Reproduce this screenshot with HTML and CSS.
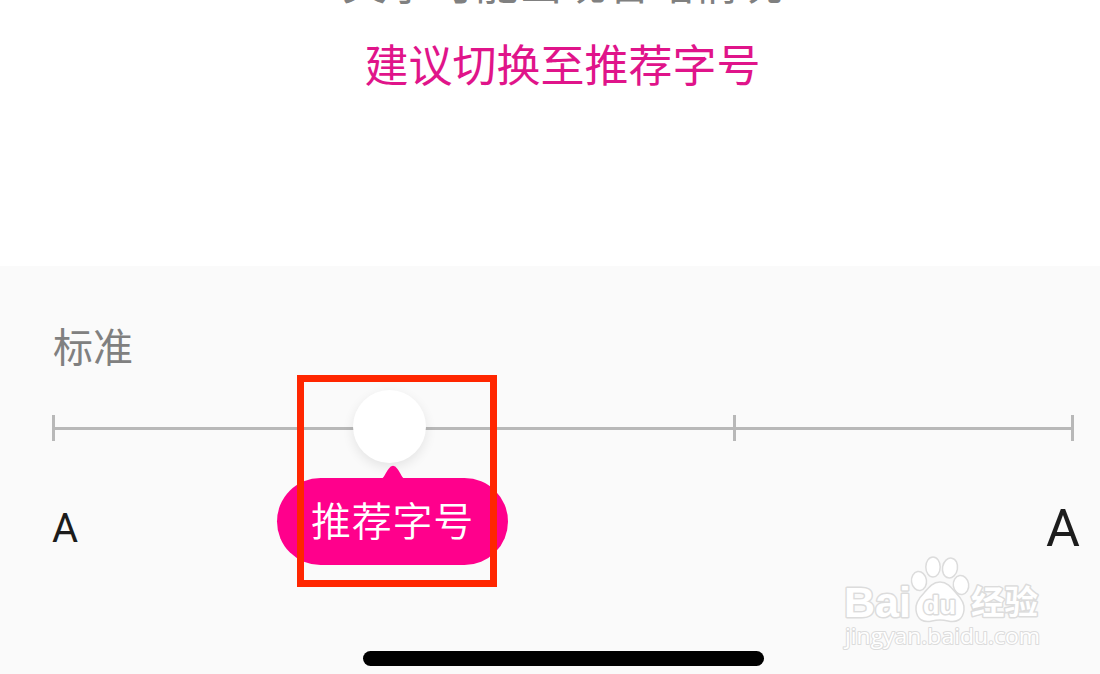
FILE: index.html
```
<!DOCTYPE html>
<html lang="zh-CN">
<head>
    <meta charset="UTF-8">
    <meta name="viewport" content="width=device-width, initial-scale=1.0">
    <title>字号设置</title>
    <link rel="stylesheet" href="styles.css">
</head>
<body>
    <div class="page">
        <div class="preview">
            <p class="notice">文字可能出现省略情况</p>
            <p class="suggest">建议切换至推荐字号</p>
        </div>

        <div class="panel">
            <div class="level">标准</div>

            <div class="slider">
                <span class="tick"></span>
                <span class="line"></span>
                <span class="tick"></span>
                <span class="line"></span>
                <span class="tick"></span>
                <span class="line line-last"></span>
                <span class="tick"></span>
                <div class="thumb"></div>
                <div class="tip">
                    <svg class="tip-arrow" width="26" height="14" viewBox="0 0 26 14">
                        <path d="M1 14 C4 13 5 9 8.5 4 Q13 -2.5 17.5 4 C21 9 22 13 25 14 Z" fill="#ff008c"/>
                    </svg>
                    推荐字号
                </div>
                <div class="highlight"></div>
            </div>

            <div class="sizes">
                <span class="size-small">A</span>
                <span class="size-large">A</span>
            </div>

            <div class="home-bar"></div>
        </div>

        <svg class="watermark" width="210" height="110" viewBox="0 0 210 110">
            <g fill="#fff" stroke="#dcdcdc" stroke-width="1.5">
                <ellipse cx="79" cy="31" rx="7.5" ry="9.5" transform="rotate(-8 79 31)"/>
                <ellipse cx="93" cy="17" rx="7.2" ry="10"/>
                <ellipse cx="110" cy="18" rx="7.5" ry="10" transform="rotate(10 110 18)"/>
                <ellipse cx="121" cy="35" rx="7.7" ry="9.5" transform="rotate(-8 121 35)"/>
                <path d="M100 32 C107 32 111 37 116 43 C121 48 125 53 124 60 C123 70 116 73 108 71 C102 69.5 98 69.5 92 71 C84 73 77 70 76 60 C75 53 79 48 84 43 C89 37 93 32 100 32 Z"/>
            </g>
            <text class="mark-name" x="4" y="67" textLength="67" lengthAdjust="spacingAndGlyphs">Bai</text>
            <text class="mark-du" x="83" y="64" textLength="33" lengthAdjust="spacingAndGlyphs">du</text>
            <text class="mark-cn" x="131" y="64" textLength="67" lengthAdjust="spacingAndGlyphs">经验</text>
            <text class="mark-url" x="5" y="94" textLength="195" lengthAdjust="spacingAndGlyphs">jingyan.baidu.com</text>
        </svg>
    </div>
</body>
</html>
```

FILE: styles.css
```
* {
    margin: 0;
    padding: 0;
    box-sizing: border-box;
}

body {
    font-family: "Noto Sans CJK SC", sans-serif;
    background: #fff;
    overflow: hidden;
}

.page {
    position: relative;
    height: 674px;
    display: flex;
    flex-direction: column;
}

.preview {
    height: 266px;
    padding-left: 25px;
    overflow: hidden;
    text-align: center;
    font-size: 44px;
    line-height: 80px;
}

.notice {
    margin: -59px 0 2px;
    color: #808080;
}

.suggest {
    color: #e0148a;
}

.panel {
    flex: 1;
    display: flex;
    flex-direction: column;
    padding: 49px 20px 8px 52px;
    background: #fafafa;
}

.level {
    height: 60px;
    padding-left: 1px;
    font-size: 40px;
    line-height: 60px;
    color: #808080;
}

.slider {
    position: relative;
    display: flex;
    align-items: center;
    height: 26px;
    margin: 40px 6px 0 0;
}

.tick {
    width: 3px;
    height: 26px;
    background: #b8b8b8;
}

.line {
    flex: 1;
    height: 3px;
    background: #b8b8b8;
}

.line-last {
    flex: 0 0 335px;
}

.thumb {
    position: absolute;
    left: 301px;
    top: -25px;
    width: 73px;
    height: 73px;
    border-radius: 50%;
    background: #fff;
    box-shadow: 0 4px 12px rgba(0, 0, 0, 0.09);
}

.tip {
    position: absolute;
    left: 225px;
    top: 63px;
    width: 231px;
    height: 87px;
    border-radius: 44px;
    background: #ff008c;
    color: #fff;
    font-size: 40px;
    font-weight: 350;
    letter-spacing: 0.8px;
    line-height: 83px;
    text-align: center;
}

.tip-arrow {
    position: absolute;
    left: 103px;
    top: -13px;
}

.highlight {
    position: absolute;
    left: 245px;
    top: -40px;
    width: 200px;
    height: 212px;
    border: 7px solid #ff2600;
}

.sizes {
    display: flex;
    justify-content: space-between;
    align-items: center;
    margin-top: 57px;
    height: 60px;
    font-family: Roboto, sans-serif;
    color: #1c1c1c;
}

.size-small {
    font-size: 40px;
}

.size-large {
    font-size: 52px;
}

.home-bar {
    width: 401px;
    height: 15px;
    margin: auto 0 0 311px;
    border-radius: 8px;
    background: #000;
}

.watermark {
    position: absolute;
    left: 840px;
    top: 550px;
}

.watermark text {
    fill: #fff;
    stroke: #dcdcdc;
    stroke-width: 3px;
    stroke-linejoin: round;
    paint-order: stroke;
    font-family: "Liberation Sans", sans-serif;
}

.watermark .mark-name {
    font-size: 43px;
    font-weight: bold;
}

.watermark .mark-du {
    font-size: 26px;
    font-weight: bold;
}

.watermark .mark-cn {
    font-family: "Noto Sans CJK SC", sans-serif;
    font-size: 33px;
    font-weight: bold;
}

.watermark .mark-url {
    font-family: "Open Sans", sans-serif;
    font-size: 22px;
    stroke-width: 2px;
}
```
